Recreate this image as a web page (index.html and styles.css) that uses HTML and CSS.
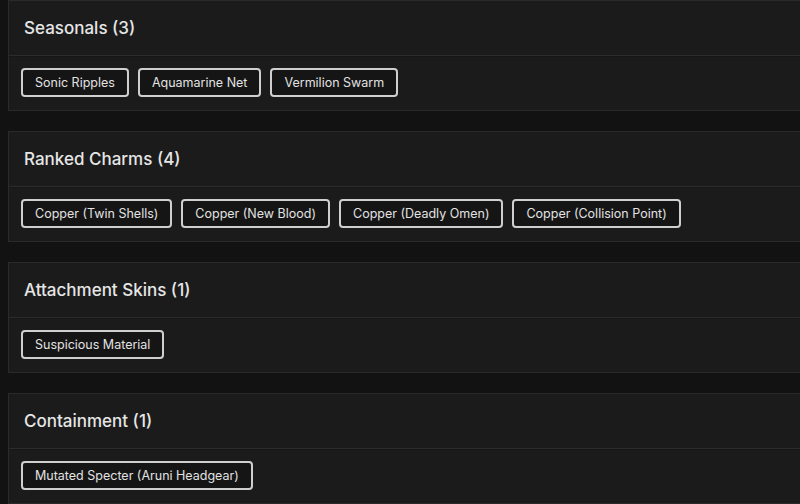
FILE: index.html
```html
<!DOCTYPE html>
<html>
<head>
<meta charset="utf-8">
<link rel="stylesheet" href="styles.css">
</head>
<body>
<div class="list">
  <section class="card">
    <div class="card-head">Seasonals (3)</div>
    <div class="card-body">
      <span class="chip">Sonic Ripples</span>
      <span class="chip">Aquamarine Net</span>
      <span class="chip">Vermilion Swarm</span>
    </div>
  </section>
  <section class="card">
    <div class="card-head">Ranked Charms (4)</div>
    <div class="card-body">
      <span class="chip">Copper (Twin Shells)</span>
      <span class="chip">Copper (New Blood)</span>
      <span class="chip">Copper (Deadly Omen)</span>
      <span class="chip">Copper (Collision Point)</span>
    </div>
  </section>
  <section class="card">
    <div class="card-head">Attachment Skins (1)</div>
    <div class="card-body">
      <span class="chip">Suspicious Material</span>
    </div>
  </section>
  <section class="card">
    <div class="card-head">Containment (1)</div>
    <div class="card-body">
      <span class="chip">Mutated Specter (Aruni Headgear)</span>
    </div>
  </section>
</div>
</body>
</html>
```

FILE: styles.css
```css
html, body {
  margin: 0;
  padding: 0;
  background: #121212;
  overflow: hidden;
}
body {
  font-family: Inter, "Open Sans", sans-serif;
  color: #e4e4e4;
}
.list {
  display: flex;
  flex-direction: column;
  gap: 20px;
  padding: 0 0 0 8px;
  margin-right: -20px;
}
.card {
  background: #1b1b1b;
  border: 1px solid #2a2a2a;
}
.card-head {
  padding: 16px 15px;
  font-size: 17px;
  line-height: 22px;
  font-weight: 500;
  color: #e6e6e6;
  border-bottom: 1px solid #2c2c2c;
  box-shadow: 0 1px 0 #161616;
}
.card-body {
  display: flex;
  flex-wrap: wrap;
  gap: 9px;
  padding: 12px 12px 13px;
}
.chip {
  display: inline-block;
  padding: 4px 12px;
  font-size: 12.5px;
  line-height: 17px;
  color: #e2e2e2;
  background: #151515;
  border: 2px solid #cfcfcf;
  border-radius: 4px;
}
```
